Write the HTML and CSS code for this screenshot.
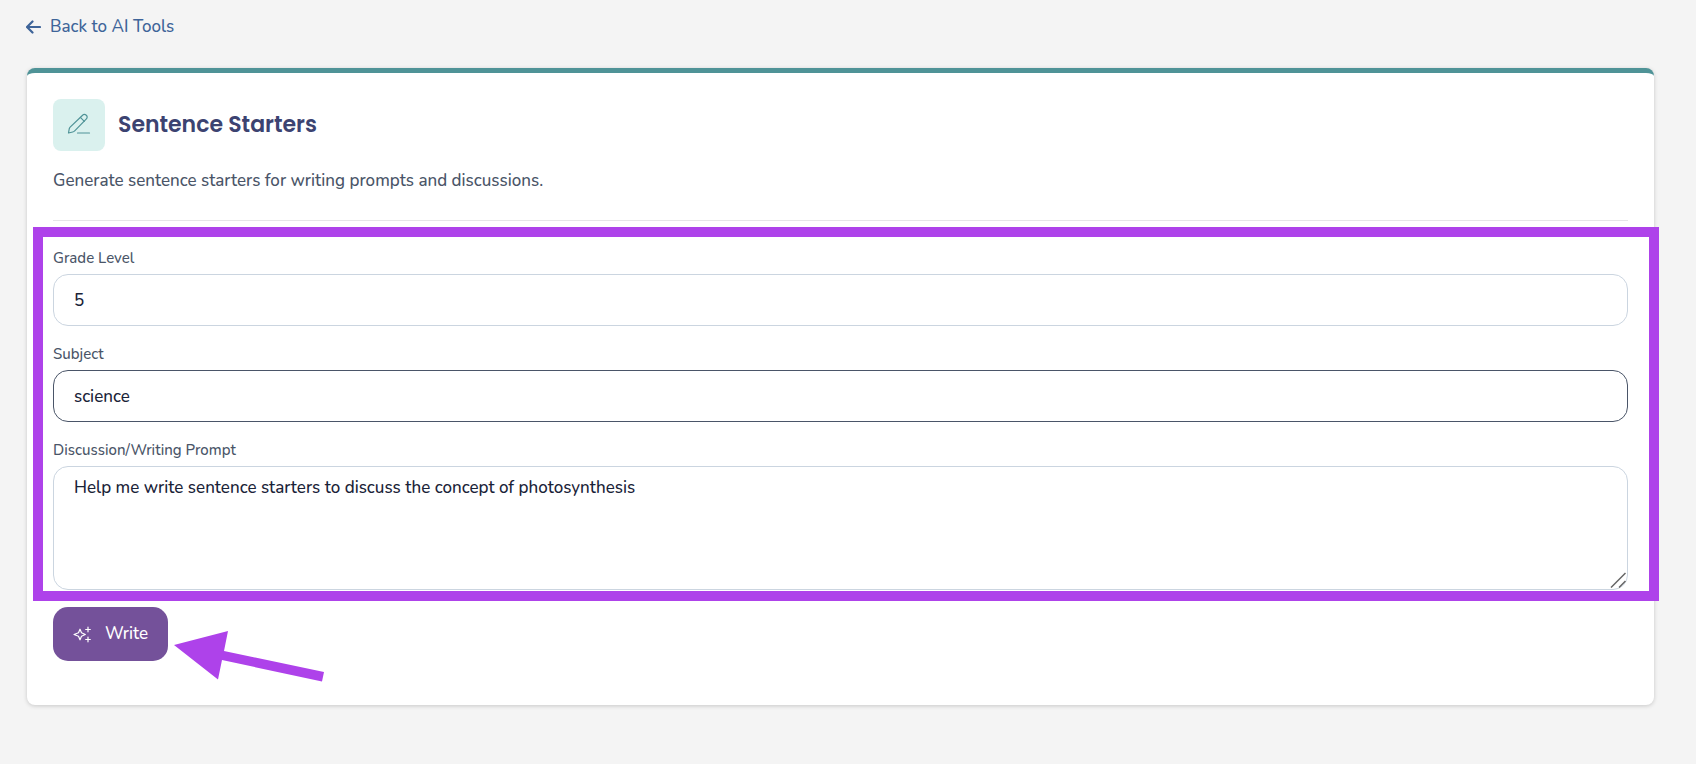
FILE: index.html
```
<!DOCTYPE html>
<html lang="en">
<head>
    <meta charset="UTF-8">
    <meta name="viewport" content="width=device-width, initial-scale=1.0">
    <title>Sentence Starters</title>
    <link rel="stylesheet" href="styles.css">
</head>
<body>
    <a class="back-link" href="#">
        <svg class="back-icon" width="15" height="14" viewBox="0 0 15 14" fill="none" stroke="currentColor" stroke-width="2.2" stroke-linecap="round" stroke-linejoin="round">
            <path d="M14 7H1.500M6.500 1.500L1 7l5.500 5.500"/>
        </svg>
        Back to AI Tools
    </a>

    <main class="card">
        <header class="card-header">
            <div class="title-row">
                <div class="tool-icon">
                    <svg width="24" height="24" viewBox="0 0 24 24" fill="none" stroke="currentColor" stroke-width="1.2" stroke-linecap="round" stroke-linejoin="round">
                        <path d="M15.600 2.200c1-1 2.500-1.100 3.700 0s1.100 2.700.1 3.700L7.700 17.800c-.6.600-1.200 1-2 1.200L1.500 20l.7-4c.2-.8.600-1.500 1.200-2.100z"/>
                        <path d="M13.400 4.400l3.900 3.900M10.500 20H22.500"/>
                    </svg>
                </div>
                <h1>Sentence Starters</h1>
            </div>
            <p class="description">Generate sentence starters for writing prompts and discussions.</p>
        </header>

        <form>
            <div class="fields">
                <div class="field">
                    <label for="grade">Grade Level</label>
                    <input id="grade" type="text" value="5">
                </div>
                <div class="field">
                    <label for="subject">Subject</label>
                    <input id="subject" class="active" type="text" value="science">
                </div>
                <div class="field">
                    <label for="prompt">Discussion/Writing Prompt</label>
                    <textarea id="prompt">Help me write sentence starters to discuss the concept of photosynthesis</textarea>
                    <svg class="grip" width="16" height="16" viewBox="0 0 16 16" fill="none" stroke="#666" stroke-width="1.5">
                        <path d="M1 15.500L15.500 1M9 15.500L15.500 9"/>
                    </svg>
                </div>
                <div class="highlight"></div>
            </div>
            <div class="actions">
                <button class="button" type="button">
                    <svg width="18" height="18" viewBox="0 0 18 18" fill="none" stroke="currentColor" stroke-width="1.2" stroke-linecap="round" stroke-linejoin="round">
                        <path d="M7 4.200l1.500 3.600L12.300 9.500 8.500 11.200 7 14.800 5.500 11.200 1 9.500 5.500 7.800z"/>
                        <path d="M15 2.200v4.600M12.700 4.500h4.600M15 12.200v4.600M12.700 14.500h4.600"/>
                    </svg>
                    Write
                </button>
                <svg class="arrow" width="152" height="52" viewBox="0 0 152 52" fill="#ae42ea">
                    <path d="M0 15L54 1l-4 20 100 21-2 9.500L48 30l-4 19.500z"/>
                </svg>
            </div>
        </form>
    </main>
</body>
</html>
```
FILE: styles.css
```
* {
    box-sizing: border-box;
}
body {
    margin: 0;
    padding: 14px 42px 26px 26px;
    background: #f4f4f4;
    color: #4a5568;
    font-family: "Nunito", "Lato", sans-serif;
    font-size: 17px;
    font-weight: 500;
    line-height: 26px;
}
.back-link {
    display: flex;
    align-items: center;
    gap: 9px;
    width: fit-content;
    color: #3e6499;
    text-decoration: none;
}
.card {
    margin-top: 28px;
    margin-left: 1px;
    padding: 26px 26px 44px;
    background: white;
    border-top: 5px solid #4f9397;
    border-radius: 8px;
    box-shadow: 0 1px 4px rgba(0, 0, 0, 0.18);
}
.card-header {
    margin-bottom: 27px;
    padding-bottom: 26px;
    border-bottom: 1px solid #e5e5e8;
}
.title-row {
    display: flex;
    align-items: center;
    gap: 13px;
}
.tool-icon {
    display: flex;
    align-items: center;
    justify-content: center;
    width: 52px;
    height: 52px;
    background: #daf1ee;
    border-radius: 8px;
    color: #4f9397;
}
h1 {
    margin: 0;
    color: #3c4371;
    font-family: "Poppins", "Inter", sans-serif;
    font-size: 22px;
    font-weight: 600;
}
.description {
    margin: 17px 0 0;
}
.fields {
    position: relative;
    display: flex;
    flex-direction: column;
    gap: 18px;
}
.field {
    position: relative;
    display: flex;
    flex-direction: column;
    gap: 6px;
}
label {
    font-size: 15px;
    line-height: 20px;
}
input, textarea {
    width: 100%;
    height: 52px;
    padding: 0 20px;
    background: white;
    border: 1px solid #cbd5e0;
    border-radius: 15px;
    outline: none;
    color: #1a2338;
    font: inherit;
}
input.active {
    border-color: #4a5568;
}
textarea {
    display: block;
    height: 124px;
    padding-top: 8px;
    resize: none;
}
.grip {
    position: absolute;
    right: 2px;
    bottom: 2px;
}
/* marker drawn over the form */
.highlight {
    position: absolute;
    top: -21px;
    right: -31px;
    bottom: -11px;
    left: -20px;
    border: 10px solid #ae42ea;
    pointer-events: none;
}
.actions {
    position: relative;
    display: flex;
    margin-top: 17px;
}
.button {
    display: flex;
    align-items: center;
    gap: 14px;
    height: 54px;
    padding: 0 20px;
    background: #74519a;
    border: none;
    border-radius: 15px;
    color: white;
    font: inherit;
    cursor: pointer;
}
.arrow {
    position: absolute;
    top: 23px;
    left: 121px;
}
```
